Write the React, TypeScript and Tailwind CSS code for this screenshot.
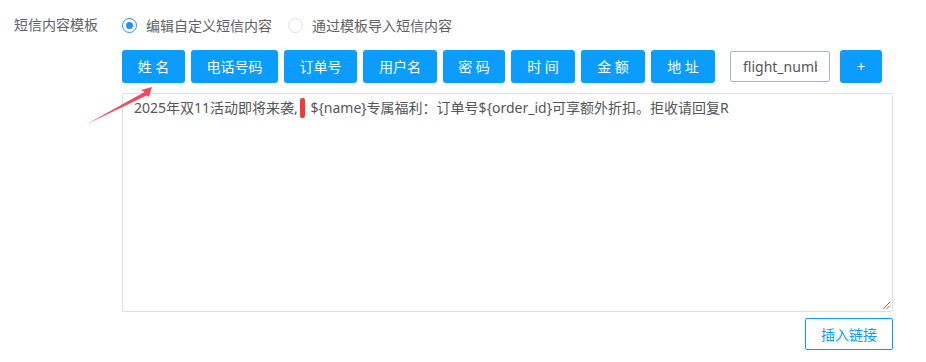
import React from "react";

const tags: [string, string][] = [
  ["姓 名", "w-[63px]"],
  ["电话号码", "w-[87px]"],
  ["订单号", "w-[73px]"],
  ["用户名", "w-[74px]"],
  ["密 码", "w-[62px]"],
  ["时 间", "w-[64px]"],
  ["金 额", "w-[64px]"],
  ["地 址", "w-[64px]"],
];

export default function App() {
  return (
    <div
      className="relative w-[926px] h-[362px] bg-white text-[#606266]"
      style={{ fontFamily: '"Noto Sans", "Noto Sans CJK SC", sans-serif' }}
    >
      <div className="flex">
        <div className="w-[122px] shrink-0 pl-[14px] pt-[15px] text-[14px] leading-[20px]">短信内容模板</div>
        <div className="flex flex-col">
          <div className="flex items-center h-[20px] mt-[15px] text-[14px]">
            <span className="w-[15px] h-[15px] rounded-full border border-[#1e90ff] flex items-center justify-center">
              <span className="w-[7px] h-[7px] rounded-full bg-[#1e90ff]" />
            </span>
            <span className="ml-[9px]">编辑自定义短信内容</span>
            <span className="ml-[16px] w-[15px] h-[15px] rounded-full border border-[#dcdfe6]" />
            <span className="ml-[9px]">通过模板导入短信内容</span>
          </div>
          <div className="flex items-center mt-[15px] h-[33px]">
            {tags.map(([t, w], i) => (
              <div
                key={t}
                className={`h-[33px] ${w} flex items-center justify-center rounded-[3px] bg-[#0a9cff] text-white text-[14px] whitespace-pre ${i > 0 ? "ml-[6px]" : ""}`}
              >
                {t}
              </div>
            ))}
            <input
              readOnly
              value="flight_number"
              className="ml-[15px] w-[100px] h-[31px] border border-[#a9b6c8] rounded-[2px] px-[12px] text-[14px] text-[#555] outline-none"
              style={{ fontFamily: '"Noto Sans", "Noto Sans CJK SC", sans-serif' }}
            />
            <div className="ml-[10px] w-[42px] h-[33px] rounded-[3px] bg-[#0a9cff] text-white text-[15px] flex items-center justify-center">+</div>
          </div>
          <div className="mt-[10px] w-[771px] h-[219px] border border-[#dcdfe6] rounded-[2px] relative px-[11px] pt-[4px] text-[14px] text-[#555] leading-[20px]">
            <span>2025年双11活动即将来袭,</span>
            <span className="inline-block align-middle w-[5px] h-[20px] mx-[2px] -mt-[3px] rounded-[2px] bg-[#f03a3a]" />
            <span> ${"{name}"}专属福利：订单号${"{order_id}"}可享额外折扣。拒收请回复R</span>
            <svg className="absolute right-[1px] bottom-[1px]" width="9" height="9" viewBox="0 0 9 9">
              <path d="M8 1L1 8M8 4.5L4.5 8" stroke="#777" strokeWidth="1" />
            </svg>
          </div>
          <div className="flex justify-end mt-[6px] w-[771px]">
            <div className="w-[88px] h-[32px] border border-[#0a9cff] rounded-[2px] text-[#0a9cff] text-[14px] flex items-center justify-center">插入链接</div>
          </div>
        </div>
      </div>
      <svg className="absolute left-0 top-0 pointer-events-none" width="926" height="362">
        <path d="M152 87 L141 90 L144.5 92 L87 124 L146.5 95.5 L149 97 Z" fill="#f5495f" />
      </svg>
    </div>
  );
}
